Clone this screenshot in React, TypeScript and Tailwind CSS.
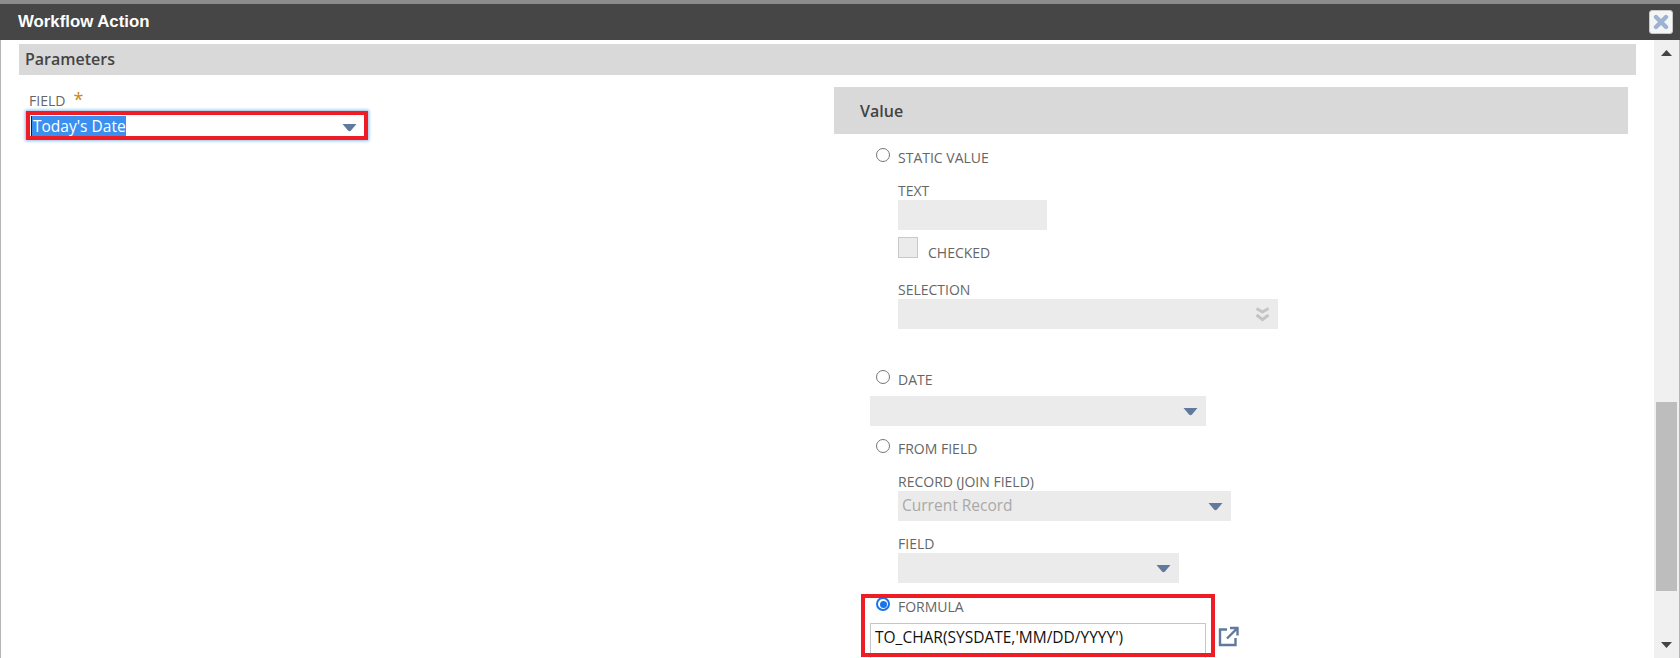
import React from "react";

const Caret = ({ className = "" }: { className?: string }) => (
  <svg width="15" height="9" viewBox="0 0 15 9" className={className}>
    <path d="M0.5 1 H14.5 L9 7.6 Q7.5 9 6 7.6 Z" fill="#5f7a9c" />
  </svg>
);

const Radio = ({ checked = false }: { checked?: boolean }) =>
  checked ? (
    <span className="flex h-[14px] w-[14px] shrink-0 items-center justify-center rounded-full border-2 border-[#1a73e8] bg-white">
      <span className="h-[7px] w-[7px] rounded-full bg-[#1a73e8]" />
    </span>
  ) : (
    <span className="block h-[14px] w-[14px] shrink-0 rounded-full border border-[#767676] bg-white" />
  );

const Label = ({ children, className = "" }: { children: React.ReactNode; className?: string }) => (
  <div className={`text-[14px] leading-[18px] text-[#666666] ${className}`}>{children}</div>
);

const RadioRow = ({ label, checked, className = "" }: { label: string; checked?: boolean; className?: string }) => (
  <div className={`flex h-[18px] items-start gap-[8px] ${className}`}>
    <Radio checked={checked} />
    <Label className="mt-[1px]">{label}</Label>
  </div>
);

const Box = ({ className = "", children }: { className?: string; children?: React.ReactNode }) => (
  <div className={`flex h-[30px] items-center justify-between bg-[#ebebeb] pr-[8px] ${className}`}>{children}</div>
);

export default function App() {
  return (
    <div className="flex h-[658px] w-[1680px] flex-col overflow-hidden bg-white font-['Open_Sans',sans-serif]">
      <div className="h-[4px] shrink-0 bg-[#8c8c8c]" />
      <header className="flex h-[36px] shrink-0 items-center justify-between bg-[#464646] pl-[18px] pr-[7px]">
        <h1 className="font-['Liberation_Sans',sans-serif] text-[16.8px] font-bold text-white">Workflow Action</h1>
        <button className="flex h-[24px] w-[24px] items-center justify-center rounded-[3px] border border-[#c8c8c8] bg-[#f4f5f7]">
          <svg width="16" height="16" viewBox="0 0 16 16">
            <path d="M3 3 L13 13 M13 3 L3 13" stroke="#9db3d0" strokeWidth="4.4" strokeLinecap="round" />
          </svg>
        </button>
      </header>

      <div className="flex min-h-0 flex-1 border-l border-[#b5b5b5]">
        <main className="min-w-0 flex-1 overflow-hidden pl-[18px] pr-[18px] pt-[4px]">
          <div className="flex h-[31px] items-center bg-[#d9d9d9] pb-[2px] pl-[6px] text-[16px] font-semibold text-[#444444]">
            Parameters
          </div>

          <div className="flex items-start">
            <section className="w-[815px] shrink-0 pl-[7px] pt-[15px]">
              <div className="flex items-start pl-[3px]">
                <Label className="mt-[2px]">FIELD</Label>
                <span className="ml-[8px] text-[18px] leading-[18px] text-[#c98a10]">*</span>
              </div>
              <div className="mt-[1px] flex h-[29px] w-[342px] items-end justify-between border-[4px] border-[#ee1c25] bg-white pl-[1px] pr-[7px] shadow-[0_0_3px_1px_#8dbbe8]">
                <span className="border-l border-[#222] bg-[#3b8fee] pl-[1px] text-[15.5px] leading-[20px] text-white">
                  Today's Date
                </span>
                <Caret className="mb-[4px]" />
              </div>
            </section>

            <section className="w-[794px] shrink-0 pt-[12px]">
              <div className="flex h-[47px] items-center bg-[#d9d9d9] pl-[26px] text-[16px] font-semibold text-[#444444]">
                Value
              </div>

              <div className="pl-[36px]">
                <div className="pl-[6px] pt-[14px]">
                  <RadioRow label="STATIC VALUE" />
                  <div className="pl-[22px] pt-[16px]">
                    <Label>TEXT</Label>
                    <Box className="w-[149px]" />
                    <div className="mt-[7px] flex items-end gap-[10px]">
                      <span className="h-[21px] w-[20px] border border-[#c9c9c9] bg-[#ebebeb]" />
                      <Label className="-mb-[4px]">CHECKED</Label>
                    </div>
                    <Label className="mt-[23px]">SELECTION</Label>
                    <Box className="w-[380px]">
                      <span />
                      <svg width="15" height="15" viewBox="0 0 15 15">
                        <path d="M1.5 1.5 L7.5 5 L13.5 1.5 M1.5 8 L7.5 12.5 L13.5 8" fill="none" stroke="#c4c4c4" strokeWidth="3" />
                      </svg>
                    </Box>
                  </div>
                </div>

                <RadioRow label="DATE" className="ml-[6px] mt-[41px]" />
                <Box className="mt-[8px] w-[336px] justify-end">
                  <Caret />
                </Box>

                <RadioRow label="FROM FIELD" className="ml-[6px] mt-[13px]" />
                <div className="pl-[28px] pt-[16px]">
                  <Label>RECORD (JOIN FIELD)</Label>
                  <Box className="w-[333px] pl-[4px]">
                    <span className="text-[15.5px] text-[#a9a9a9]">Current Record</span>
                    <Caret />
                  </Box>
                  <Label className="mt-[14px]">FIELD</Label>
                  <Box className="w-[281px] justify-end">
                    <Caret />
                  </Box>
                </div>

                <div className="relative mt-[13px] pt-[1px]">
                  <RadioRow label="FORMULA" checked className="ml-[6px]" />
                  <div className="mt-[8px] flex items-start">
                    <div className="h-[40px] w-[336px] border border-[#c6c6c6] bg-white pl-[4px] pt-[3px] text-[15.5px] leading-[20px] text-[#111111]">
                      TO_CHAR(SYSDATE,'MM/DD/YYYY')
                    </div>
                    <svg className="ml-[12px] mt-[3px]" width="21" height="21" viewBox="0 0 21 21" fill="none" stroke="#5f7a9c" strokeWidth="2.4">
                      <path d="M9 3.5 H2 V19 H17.5 V12" />
                      <path d="M12 2 H19.5 V9.5 M19 2.5 L9 12.5" />
                    </svg>
                  </div>
                  <div className="pointer-events-none absolute -left-[9px] -top-[2px] h-[63px] w-[354px] border-[4px] border-[#ee1c25]" />
                </div>
              </div>
            </section>
          </div>
        </main>

        <aside className="flex h-full w-[26px] shrink-0 flex-col items-center border-r border-[#b5b5b5] bg-[#f0f0f0]">
          <svg className="mt-[10px]" width="11" height="6" viewBox="0 0 11 6">
            <path d="M5.5 0 L11 6 H0 Z" fill="#444444" />
          </svg>
          <div className="mt-[346px] h-[189px] w-[21px] bg-[#bdbdbd]" />
          <svg className="mt-[51px]" width="11" height="6" viewBox="0 0 11 6">
            <path d="M5.5 6 L11 0 H0 Z" fill="#444444" />
          </svg>
        </aside>
      </div>
    </div>
  );
}
